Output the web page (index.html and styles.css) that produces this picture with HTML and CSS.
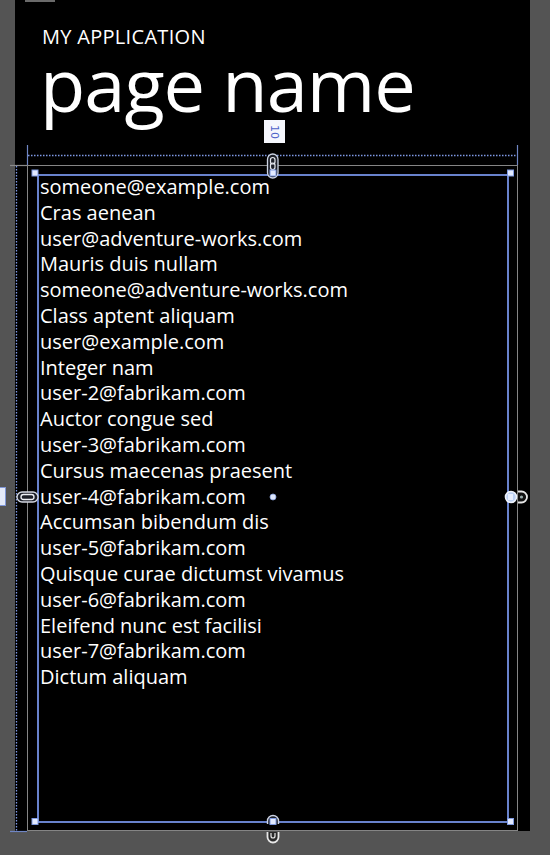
FILE: index.html
```html
<!DOCTYPE html>
<html lang="en">
<head>
<meta charset="utf-8">
<title>MY APPLICATION - page name</title>
<link rel="stylesheet" href="styles.css">
</head>
<body>
<div class="stage">
  <div class="screen">
    <header class="title-panel">
      <div class="app-name">MY APPLICATION</div>
      <h1 class="page-name">page name</h1>
    </header>
    <div class="content-panel">
      <div class="listbox">
        <ul class="items">
          <li>someone@example.com</li>
          <li>Cras aenean</li>
          <li>user@adventure-works.com</li>
          <li>Mauris duis nullam</li>
          <li>someone@adventure-works.com</li>
          <li>Class aptent aliquam</li>
          <li>user@example.com</li>
          <li>Integer nam</li>
          <li>user-2@fabrikam.com</li>
          <li>Auctor congue sed</li>
          <li>user-3@fabrikam.com</li>
          <li>Cursus maecenas praesent</li>
          <li>user-4@fabrikam.com</li>
          <li>Accumsan bibendum dis</li>
          <li>user-5@fabrikam.com</li>
          <li>Quisque curae dictumst vivamus</li>
          <li>user-6@fabrikam.com</li>
          <li>Eleifend nunc est facilisi</li>
          <li>user-7@fabrikam.com</li>
          <li>Dictum aliquam</li>
        </ul>
      </div>
    </div>
  </div>

  <span class="margin-label">10</span>
  <span class="side-label"></span>

  <svg class="adorners" width="550" height="855" viewBox="0 0 550 855" aria-hidden="true">
    <!-- top-left artifact -->
    <rect x="25" y="0" width="30" height="2" fill="#6a6a6a"/>

    <!-- top margin dotted line with end caps -->
    <line x1="28" y1="155.5" x2="517" y2="155.5" stroke="#7e98e4" stroke-width="1.5" stroke-dasharray="1.5 1.5"/>
    <line x1="27.5" y1="145" x2="27.5" y2="165" stroke="#6f86c4" stroke-width="1.2"/>
    <line x1="517.5" y1="145" x2="517.5" y2="165" stroke="#6f86c4" stroke-width="1.2"/>

    <!-- left margin dotted line with ticks -->
    <line x1="10" y1="165.5" x2="27" y2="165.5" stroke="#8a8a8a" stroke-width="1.2"/>
    <line x1="16.5" y1="166" x2="16.5" y2="831" stroke="#7e98e4" stroke-width="1.3" stroke-dasharray="1.5 1.5"/>
    <line x1="10" y1="831.5" x2="27" y2="831.5" stroke="#6f86c4" stroke-width="1.2"/>

    <!-- top center anchor pill -->
    <rect x="267.5" y="154" width="10.5" height="24" rx="5.25" fill="#1c1f28" stroke="#cdd4e4" stroke-width="1.3"/>
    <rect x="270.5" y="157.5" width="4.5" height="6.5" rx="2.25" fill="none" stroke="#e6e9f0" stroke-width="1.2"/>
    <rect x="270.5" y="163" width="4.5" height="6.5" rx="2.25" fill="none" stroke="#e6e9f0" stroke-width="1.2"/>

    <!-- left middle anchor -->
    <rect x="17" y="492" width="21" height="10" rx="5" fill="#1c1f28" stroke="#d4d8e2" stroke-width="1.4"/>
    <rect x="21" y="494.5" width="13" height="5" rx="2.5" fill="none" stroke="#eef0f4" stroke-width="1.3"/>

    <!-- right middle anchors -->
    <circle cx="511" cy="497" r="5.5" fill="#bcd0f4" stroke="#eef2fb" stroke-width="1.6"/>
    <rect x="508" y="494" width="5" height="6" fill="#e8efff"/>
    <path d="M518 491.5 h3.5 a5.5 5.5 0 0 1 0 11 h-3.5" fill="#111" stroke="#e6e6e6" stroke-width="1.8"/>
    <circle cx="521.5" cy="497" r="1.6" fill="#9aa"/>

    <!-- center dot -->
    <circle cx="273" cy="497" r="3" fill="#dde6fb" stroke="#8aa2e0" stroke-width="0.8"/>

    <!-- bottom center anchor -->
    <path d="M267.5 824 v-3 a5.5 5.5 0 0 1 11 0 v3" fill="#1c1f28" stroke="#cdd4e4" stroke-width="1.4"/>
    <path d="M267.5 832 v5 a5.5 5.5 0 0 0 11 0 v-5" fill="#2a2a2a" stroke="#e8e8e8" stroke-width="1.8"/>
    <path d="M271 833 v3 a2 2 0 0 0 4 0 v-3" fill="none" stroke="#e8e8e8" stroke-width="1.2"/>

    <!-- selection handles -->
    <g fill="#e2eaff" stroke="#7f9ae0" stroke-width="1">
      <rect x="32" y="170" width="6" height="6"/>
      <rect x="507.5" y="170" width="6" height="6"/>
      <rect x="270" y="170" width="6" height="6"/>
      <rect x="32" y="818.5" width="6" height="6"/>
      <rect x="507.5" y="818.5" width="6" height="6"/>
      <rect x="270" y="818.5" width="6" height="6"/>
    </g>
  </svg>
</div>
</body>
</html>
```
FILE: styles.css
```css
html, body {
  margin: 0;
  padding: 0;
}

body {
  background: #545454;
  width: 550px;
  height: 855px;
  overflow: hidden;
  font-family: "Open Sans", "Noto Sans", "DejaVu Sans", sans-serif;
  color: #ffffff;
}

.stage {
  position: relative;
  width: 550px;
  height: 855px;
}

.screen {
  margin-left: 15px;
  width: 515px;
  height: 831px;
  background: #000000;
  display: flex;
  flex-direction: column;
}

.title-panel {
  padding: 25px 0 0 27px;
}

.app-name {
  font-size: 20px;
  line-height: 24px;
  letter-spacing: 0.3px;
}

.page-name {
  margin: 0 0 0 -2px;
  font-size: 74px;
  font-weight: 400;
  line-height: 70px;
  letter-spacing: -1px;
}

.content-panel {
  margin: 46px 12px 0 12px;
  flex: 1;
  border: 1px solid #858585;
  padding: 8px 8px 7px 9px;
  display: flex;
}

.listbox {
  flex: 1;
  border: 2px solid #6882cc;
}

.items {
  list-style: none;
  margin: -2px 0 0 1px;
  padding: 0;
  font-size: 20px;
  line-height: 25.8px;
}

.margin-label {
  position: absolute;
  left: 264px;
  top: 120px;
  width: 21px;
  height: 23px;
  background: #f5f7fd;
  color: #4c62c8;
  font-family: "DejaVu Sans", sans-serif;
  font-size: 11px;
  line-height: 21px;
  writing-mode: vertical-rl;
  text-align: center;
}

.side-label {
  position: absolute;
  left: 0;
  top: 487px;
  width: 5px;
  height: 17px;
  background: #e3e9f8;
  border: 1px solid #7f96d6;
  border-left: none;
}

.adorners {
  position: absolute;
  left: 0;
  top: 0;
  pointer-events: none;
}
```
